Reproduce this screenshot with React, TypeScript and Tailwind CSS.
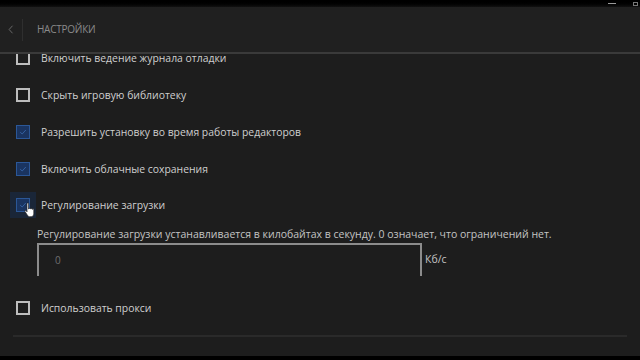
import { useState } from "react";

const font = { fontFamily: '"Open Sans", "Noto Sans", sans-serif' };

interface RowProps {
  label: string;
  checked: boolean;
  focused?: boolean;
  first?: boolean;
  onToggle: () => void;
}

function CheckRow({ label, checked, focused, first, onToggle }: RowProps) {
  return (
    <div
      className={`flex pl-4 ${first ? "h-[22.75px] items-start" : "h-[36.75px] items-center"}`}
      onClick={onToggle}
    >
      <div
        className={`relative flex h-[14px] w-[14px] shrink-0 items-center justify-center ${
          first ? "-mt-[3px]" : ""
        } ${focused ? "shadow-[0_0_0_6px_#1a2638]" : ""} ${
          checked
            ? "border border-[#2b5797] bg-[#1a3460]"
            : "border-2 border-[#bdbdbd]"
        }`}
      >
        {checked && (
          <svg viewBox="0 0 10 10" className="h-[8px] w-[8px]">
            <path d="M1.5 5.2 4 7.5 8.5 2.5" fill="none" stroke="#3a6bb0" strokeWidth="1" />
          </svg>
        )}
        {focused && (
          <svg viewBox="0 0 12 16" className="absolute left-[7px] top-[3px] h-[16px] w-[12px]">
            <path
              d="M3 1.5c0-.8 1.6-.8 1.6 0V7l.4-.1c0-.8 1.5-.8 1.5 0l.2.2c0-.8 1.5-.8 1.5 0l.2.3c0-.8 1.4-.7 1.4.1v3.8c0 2-1 3.4-2.6 3.4H5.6c-1 0-1.6-.6-2.2-1.5L1 9.5c-.4-.8.5-1.4 1.2-.8L3 9.8Z"
              fill="#ffffff"
              stroke="#222"
              strokeWidth="0.7"
            />
          </svg>
        )}
      </div>
      <span className="ml-[11px] text-[10.4px] leading-[8px] text-[#cfcfcf]">{label}</span>
    </div>
  );
}

export default function App() {
  const [checks, setChecks] = useState([false, false, true, true, true, false]);
  const toggle = (i: number) =>
    setChecks((c) => c.map((v, j) => (j === i ? !v : v)));

  const labels = [
    "Включить ведение журнала отладки",
    "Скрыть игровую библиотеку",
    "Разрешить установку во время работы редакторов",
    "Включить облачные сохранения",
    "Регулирование загрузки",
  ];

  return (
    <div className="flex h-[360px] w-[640px] flex-col overflow-hidden bg-[#1d1d1d]" style={font}>
      {/* Window strip */}
      <div className="relative h-[7px] shrink-0 bg-gradient-to-b from-black to-[#111]">
        <div className="absolute left-[608px] top-[3px] h-[1px] w-[8px] bg-[#9a9a9a]" />
        <div className="absolute left-[633px] top-[2px] h-[4px] w-[5px] border border-[#777]" />
      </div>

      {/* Header */}
      <div className="relative z-10 flex h-[45px] shrink-0 items-center bg-[#202020]">
        <div className="flex w-[22px] justify-center">
          <svg viewBox="0 0 8 12" className="h-[9px] w-[6px]">
            <path d="M6 1 1.5 6 6 11" fill="none" stroke="#6a6a6a" strokeWidth="1.3" />
          </svg>
        </div>
        <div className="h-[22px] w-px bg-[#2f2f2f]" />
        <span className="ml-[14px] text-[10px] uppercase tracking-tight text-[#8a8a8a]">
          Настройки
        </span>
      </div>
      <div className="relative z-10 h-[2px] shrink-0 bg-[#3a3a3a]" />

      {/* Content */}
      <div className="flex-1">
        {labels.map((l, i) => (
          <CheckRow
            key={l}
            label={l}
            checked={checks[i]}
            focused={i === 4}
            first={i === 0}
            onToggle={() => toggle(i)}
          />
        ))}

        <div className="ml-[37px] mt-[3px] text-[10.5px] leading-[14px] text-[#c4c4c4]">
          Регулирование загрузки устанавливается в килобайтах в секунду. 0 означает, что ограничений нет.
        </div>

        <div className="ml-[37px] mt-[2px] flex items-center">
          <div className="flex h-[33px] w-[385px] items-center border-x-2 border-t-2 border-[#8c8c8c] pl-[16px] text-[10px] text-[#6f6f6f]">
            0
          </div>
          <span className="ml-[3px] mt-[2px] text-[10.5px] text-[#c4c4c4]">Кб/с</span>
        </div>

        <div className="mt-[14px]">
          <CheckRow
            label="Использовать прокси"
            checked={checks[5]}
            onToggle={() => toggle(5)}
          />
        </div>

        <div className="mx-[13px] mt-[8px] h-[2px] bg-[#2a2a2a]" />
      </div>

      <div className="h-[4px] shrink-0 bg-black" />
    </div>
  );
}
